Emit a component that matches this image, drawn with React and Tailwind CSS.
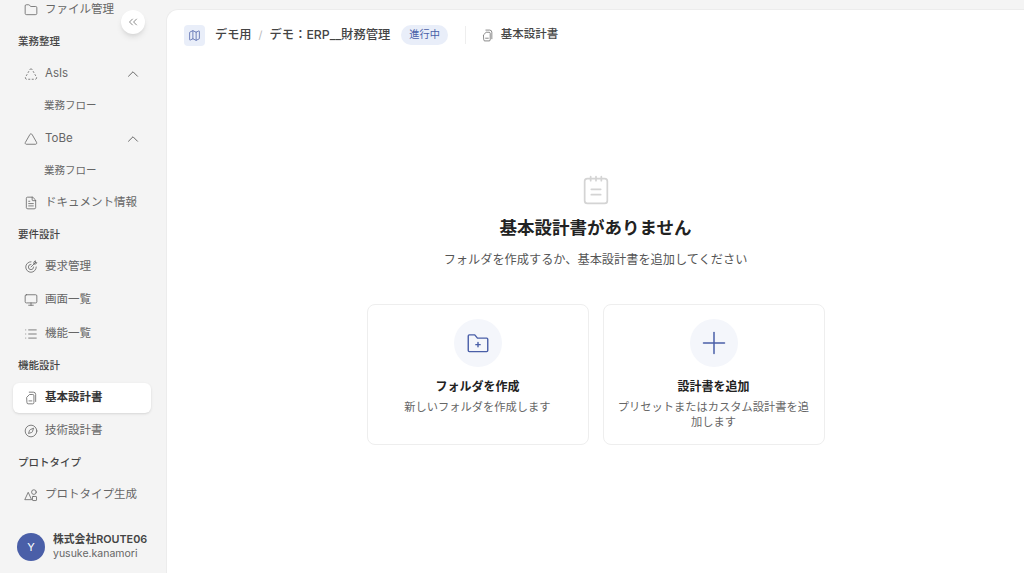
import React from "react";
import {
  ChevronUp,
  ChevronsLeft,
  Compass,
  FileText,
  Folder,
  List,
  Map,
  Monitor,
  Plus,
  Triangle,
  TriangleDashed,
} from "lucide-react";

const font = "font-['Inter','Noto_Sans_CJK_JP',sans-serif]";

const Svg = ({ size = 14, strokeWidth = 1.4, className = "", children }) => (
  <svg
    width={size}
    height={size}
    viewBox="0 0 24 24"
    fill="none"
    stroke="currentColor"
    strokeWidth={strokeWidth}
    strokeLinecap="round"
    strokeLinejoin="round"
    className={className}
  >
    {children}
  </svg>
);

// document with a second sheet peeking out behind it
const DesignDocIcon = (props) => (
  <Svg {...props}>
    <path d="M5 10.5 9.5 6H15a2 2 0 0 1 2 2v12a2 2 0 0 1-2 2H7a2 2 0 0 1-2-2z" />
    <path d="M9 2h7a4 4 0 0 1 4 4v12" />
    <path d="M8.5 17h5" />
  </Svg>
);

const TargetArrowIcon = (props) => (
  <Svg {...props}>
    <path d="M12 3a9 9 0 1 0 9 9" />
    <path d="M12 7.5a4.5 4.5 0 1 0 4.5 4.5" />
    <path d="M12 12 20 4" />
    <path d="M17 4v3h3l2-2.5h-2.500V2z" />
  </Svg>
);

const ShapesIcon = (props) => (
  <Svg {...props}>
    <path d="M7.500 8 13 20H2z" />
    <circle cx="17" cy="7" r="4" />
    <rect x="14.500" y="14.500" width="7" height="7" rx="1" />
  </Svg>
);

const NotepadIcon = (props) => (
  <Svg {...props}>
    <rect x="3.500" y="3.500" width="17" height="18.500" rx="2" />
    <path d="M8 2v3M12 2v3M16 2v3" />
    <path d="M8.500 11.500h7M8.500 15.500h7" />
  </Svg>
);

const FolderAddIcon = (props) => (
  <Svg {...props}>
    <path d="M3 5.500a1 1 0 0 1 1-1h5l2.500 3H20a1 1 0 0 1 1 1V19a1 1 0 0 1-1 1H4a1 1 0 0 1-1-1z" />
    <path d="M12 11.500v4M10 13.500h4" />
  </Svg>
);

const NavItem = ({ icon: Icon, label, open, active }) => (
  <div
    className={`flex h-[30px] w-full items-center gap-[7px] rounded-md pl-[11px] pr-[9px] text-[11.5px] ${
      active ? "bg-white font-semibold text-[#333] shadow-sm" : "text-[#666]"
    }`}
  >
    <Icon size={14} strokeWidth={1.4} className="shrink-0 text-[#666]" />
    <span>{label}</span>
    {open && <ChevronUp size={18} strokeWidth={1.3} className="ml-auto text-[#666]" />}
  </div>
);

const SubItem = ({ label }) => (
  <div className="flex h-8 items-center pl-[31px] text-[10.5px] text-[#666]">{label}</div>
);

const Section = ({ label }) => (
  <div className="flex h-8 items-center pl-[5px] text-[10.5px] font-medium text-[#444]">
    {label}
  </div>
);

const Row = ({ className = "", ...item }) => (
  <div className={`flex h-8 items-center ${className}`}>
    <NavItem {...item} />
  </div>
);

const Sidebar = () => (
  <aside className="relative flex h-full w-[166px] shrink-0 flex-col bg-[#f4f4f4] pl-[13px] pr-[15px]">
    <div className="-mt-[6px] flex flex-col">
      <Row icon={Folder} label="ファイル管理" />
      <Section label="業務整理" />
      <Row icon={TriangleDashed} label="AsIs" open />
      <SubItem label="業務フロー" />
      <Row icon={Triangle} label="ToBe" open className="mt-px" />
      <SubItem label="業務フロー" />
      <Row icon={FileText} label="ドキュメント情報" />
      <Section label="要件設計" />
      <Row icon={TargetArrowIcon} label="要求管理" />
      <Row icon={Monitor} label="画面一覧" className="mt-px" />
      <Row icon={List} label="機能一覧" className="mt-0.5" />
      <Section label="機能設計" />
      <Row icon={DesignDocIcon} label="基本設計書" active />
      <Row icon={Compass} label="技術設計書" className="mt-px" />
      <Section label="プロトタイプ" />
      <Row icon={ShapesIcon} label="プロトタイプ生成" />
    </div>

    <div className="mt-auto mb-[12px] flex items-center gap-[8px] pl-[4px]">
      <div className="flex h-7 w-7 shrink-0 items-center justify-center rounded-full bg-[#4a5fa8] text-[11px] text-white">
        Y
      </div>
      <div className="leading-[14px]">
        <div className="whitespace-nowrap text-[10.8px] font-semibold text-[#444]">株式会社ROUTE06</div>
        <div className="text-[10.5px] text-[#666]">yusuke.kanamori</div>
      </div>
    </div>

    <button className="absolute left-[121px] top-[10px] flex h-6 w-6 items-center justify-center rounded-full bg-white text-[#666] shadow-md">
      <ChevronsLeft size={14} strokeWidth={1.3} />
    </button>
  </aside>
);

const Header = () => (
  <header className="flex h-[50px] items-center pl-[17px]">
    <div className="flex h-[21px] w-[21px] items-center justify-center rounded bg-[#e9eef9] text-[#4a5fa8]">
      <Map size={13} strokeWidth={1.4} />
    </div>
    <span className="ml-[10px] text-[12.2px] font-medium text-[#444]">デモ用</span>
    <span className="mx-[7px] text-[11px] text-[#bbb]">/</span>
    <span className="text-[12.3px] font-medium text-[#444]">デモ：ERP__財務管理</span>
    <span className="ml-[11px] flex h-[20px] items-center rounded-full bg-[#e9eef9] px-2 text-[10.2px] text-[#4a5fa8]">
      進行中
    </span>
    <div className="ml-[17px] h-[18px] w-px bg-[#eeeeee]" />
    <DesignDocIcon size={13} strokeWidth={1.4} className="ml-[15px] text-[#666]" />
    <span className="ml-[7px] text-[11.5px] font-medium text-[#444]">基本設計書</span>
  </header>
);

const ActionCard = ({ icon, title, description }) => (
  <div className="flex h-[141px] w-[222px] flex-col items-center rounded-lg border border-[#eeeeee] bg-white px-3 pt-[14px] text-center">
    <div className="flex h-12 w-12 items-center justify-center rounded-full bg-[#f4f6fb] text-[#4a5fa8]">
      {icon}
    </div>
    <div className="mt-[10px] text-xs leading-5 font-semibold text-[#222]">{title}</div>
    <div className="mt-[3px] text-[11.25px] leading-[15px] text-[#666]">{description}</div>
  </div>
);

const EmptyState = () => (
  <div className="flex flex-col items-center pt-[114px]">
    <NotepadIcon size={32} strokeWidth={1.3} className="text-[#d4d4d4]" />
    <h2 className="mt-[7px] text-[17.5px] leading-[30px] font-semibold text-[#222]">
      基本設計書がありません
    </h2>
    <p className="mt-[7px] text-[12.2px] leading-5 text-[#555]">
      フォルダを作成するか、基本設計書を追加してください
    </p>
    <div className="mt-[34px] flex gap-[14px]">
      <ActionCard
        icon={<FolderAddIcon size={26} strokeWidth={1.3} />}
        title="フォルダを作成"
        description="新しいフォルダを作成します"
      />
      <ActionCard
        icon={<Plus size={36} strokeWidth={1} />}
        title="設計書を追加"
        description="プリセットまたはカスタム設計書を追加します"
      />
    </div>
  </div>
);

export default function App() {
  return (
    <div className={`flex h-[573px] w-[1024px] overflow-hidden bg-[#f4f4f4] ${font}`}>
      <Sidebar />
      <div className="mt-[9px] flex-1 rounded-tl-xl border-t border-l border-[#ececec] bg-white">
        <Header />
        <EmptyState />
      </div>
    </div>
  );
}
